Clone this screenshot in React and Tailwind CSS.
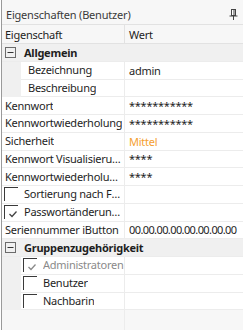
import React from "react";

const font = { fontFamily: '"Noto Sans", "Open Sans", sans-serif' };

const MinusBox = () => (
  <svg width="11" height="11" viewBox="0 0 11 11" className="shrink-0">
    <rect x="0.5" y="0.5" width="10" height="10" fill="none" stroke="#6b6b6b" />
    <line x1="2.5" y1="5.5" x2="8.5" y2="5.5" stroke="#333" />
  </svg>
);

const Check = ({ gray }) => (
  <svg width="10" height="10" viewBox="0 0 10 10" className="absolute left-[3px] top-[3px]">
    <polyline points="1.5,5 4,7.5 8.5,2.5" fill="none" stroke={gray ? "#8a8a8a" : "#444"} strokeWidth="1.3" />
  </svg>
);

const CheckBox = ({ checked, gray }) => (
  <div className="relative w-[14px] h-[14px] shrink-0 border-t border-l border-[#3a3a3a]">
    {checked && <Check gray={gray} />}
  </div>
);

const Pin = () => (
  <svg width="9" height="11" viewBox="0 0 9 11">
    <rect x="2.5" y="0.5" width="4" height="6" fill="#fff" stroke="#444" />
    <line x1="5" y1="1" x2="5" y2="6" stroke="#444" />
    <line x1="0.5" y1="7" x2="8.5" y2="7" stroke="#444" />
    <line x1="4.5" y1="7" x2="4.5" y2="11" stroke="#444" />
  </svg>
);

// one line of the grid
const Row = ({ margin, children, value, valueClass = "text-[#1e1e1e]" }) => (
  <div className="flex h-[17.75px] bg-white">
    {margin && <div className="w-[19px] shrink-0 bg-[#f0f0f0]" />}
    <div className="flex-1 min-w-0 flex border-b border-[#ececec]">
      <div className="flex-1 min-w-0 flex items-center border-r border-[#ececec]">
        {children}
      </div>
      <div className={`w-[118px] shrink-0 flex items-center pl-[4px] whitespace-nowrap ${valueClass}`}>{value}</div>
    </div>
  </div>
);

const Label = ({ text, className = "pl-[3px]" }) => (
  <span className={`min-w-0 truncate whitespace-nowrap leading-[16px] text-[#1e1e1e] ${className}`}>{text}</span>
);

const Group = ({ text }) => (
  <div className="flex h-[17.75px] bg-[#f0f0f0] items-center pl-[3px] gap-[8px] border-b border-[#ececec]">
    <MinusBox />
    <span className="font-bold text-[#1e1e1e]">{text}</span>
  </div>
);

const CheckRow = ({ margin, checked, gray, text }) => (
  <Row margin={margin} value="">
    <div className="flex items-center gap-[6px] min-w-0 pl-[2px]">
      <CheckBox checked={checked} gray={gray} />
      <span className={`min-w-0 truncate whitespace-nowrap leading-[16px] ${gray ? "text-[#8a8a8a]" : "text-[#1e1e1e]"}`}>{text}</span>
    </div>
  </Row>
);

export default function App() {
  return (
    <div className="w-[243px] h-[330px] bg-white pl-[1px] overflow-hidden text-[11px] leading-none tracking-[-0.25px]" style={font}>
      <div className="h-full flex flex-col border-l border-[#9a9a9a] bg-[#f7f7f7]">
        <div className="h-[25px] shrink-0 flex items-center justify-between pl-[4px] pr-[5px] pt-[5px] border-b border-[#e2e2e2] text-[#3a3a3a] tracking-[-0.2px]">
          <span>Eigenschaften (Benutzer)</span>
          <Pin />
        </div>
        <div className="h-[19px] shrink-0 flex border-b border-[#e2e2e2] text-[#1e1e1e]">
          <div className="flex-1 flex items-center pl-[3px] border-r border-[#e2e2e2]">Eigenschaft</div>
          <div className="w-[118px] flex items-center pl-[4px]">Wert</div>
        </div>

        <Group text="Allgemein" />
        <Row margin value="admin"><Label text="Bezeichnung" className="pl-[7px]" /></Row>
        <Row margin value=""><Label text="Beschreibung" className="pl-[7px]" /></Row>
        <Row value="***********"><Label text="Kennwort" /></Row>
        <Row value="***********"><Label text="Kennwortwiederholung" /></Row>
        <Row value="Mittel" valueClass="text-[#f5a030]"><Label text="Sicherheit" /></Row>
        <Row value="****"><Label text="Kennwort Visualisierung" /></Row>
        <Row value="****"><Label text="Kennwortwiederholung Visualisierung" /></Row>
        <CheckRow text="Sortierung nach Farbe" />
        <CheckRow checked text="Passwortänderung erzwingen" />
        <Row value="00.00.00.00.00.00.00.00" valueClass="text-[#1e1e1e] tracking-[-0.6px]"><Label text="Seriennummer iButton" /></Row>

        <Group text="Gruppenzugehörigkeit" />
        <CheckRow margin checked gray text="Administratoren" />
        <CheckRow margin text="Benutzer" />
        <CheckRow margin text="Nachbarin" />

        <div className="flex-1 flex">
          <div className="flex-1 border-r border-[#ececec]" />
          <div className="w-[118px]" />
        </div>
      </div>
    </div>
  );
}
